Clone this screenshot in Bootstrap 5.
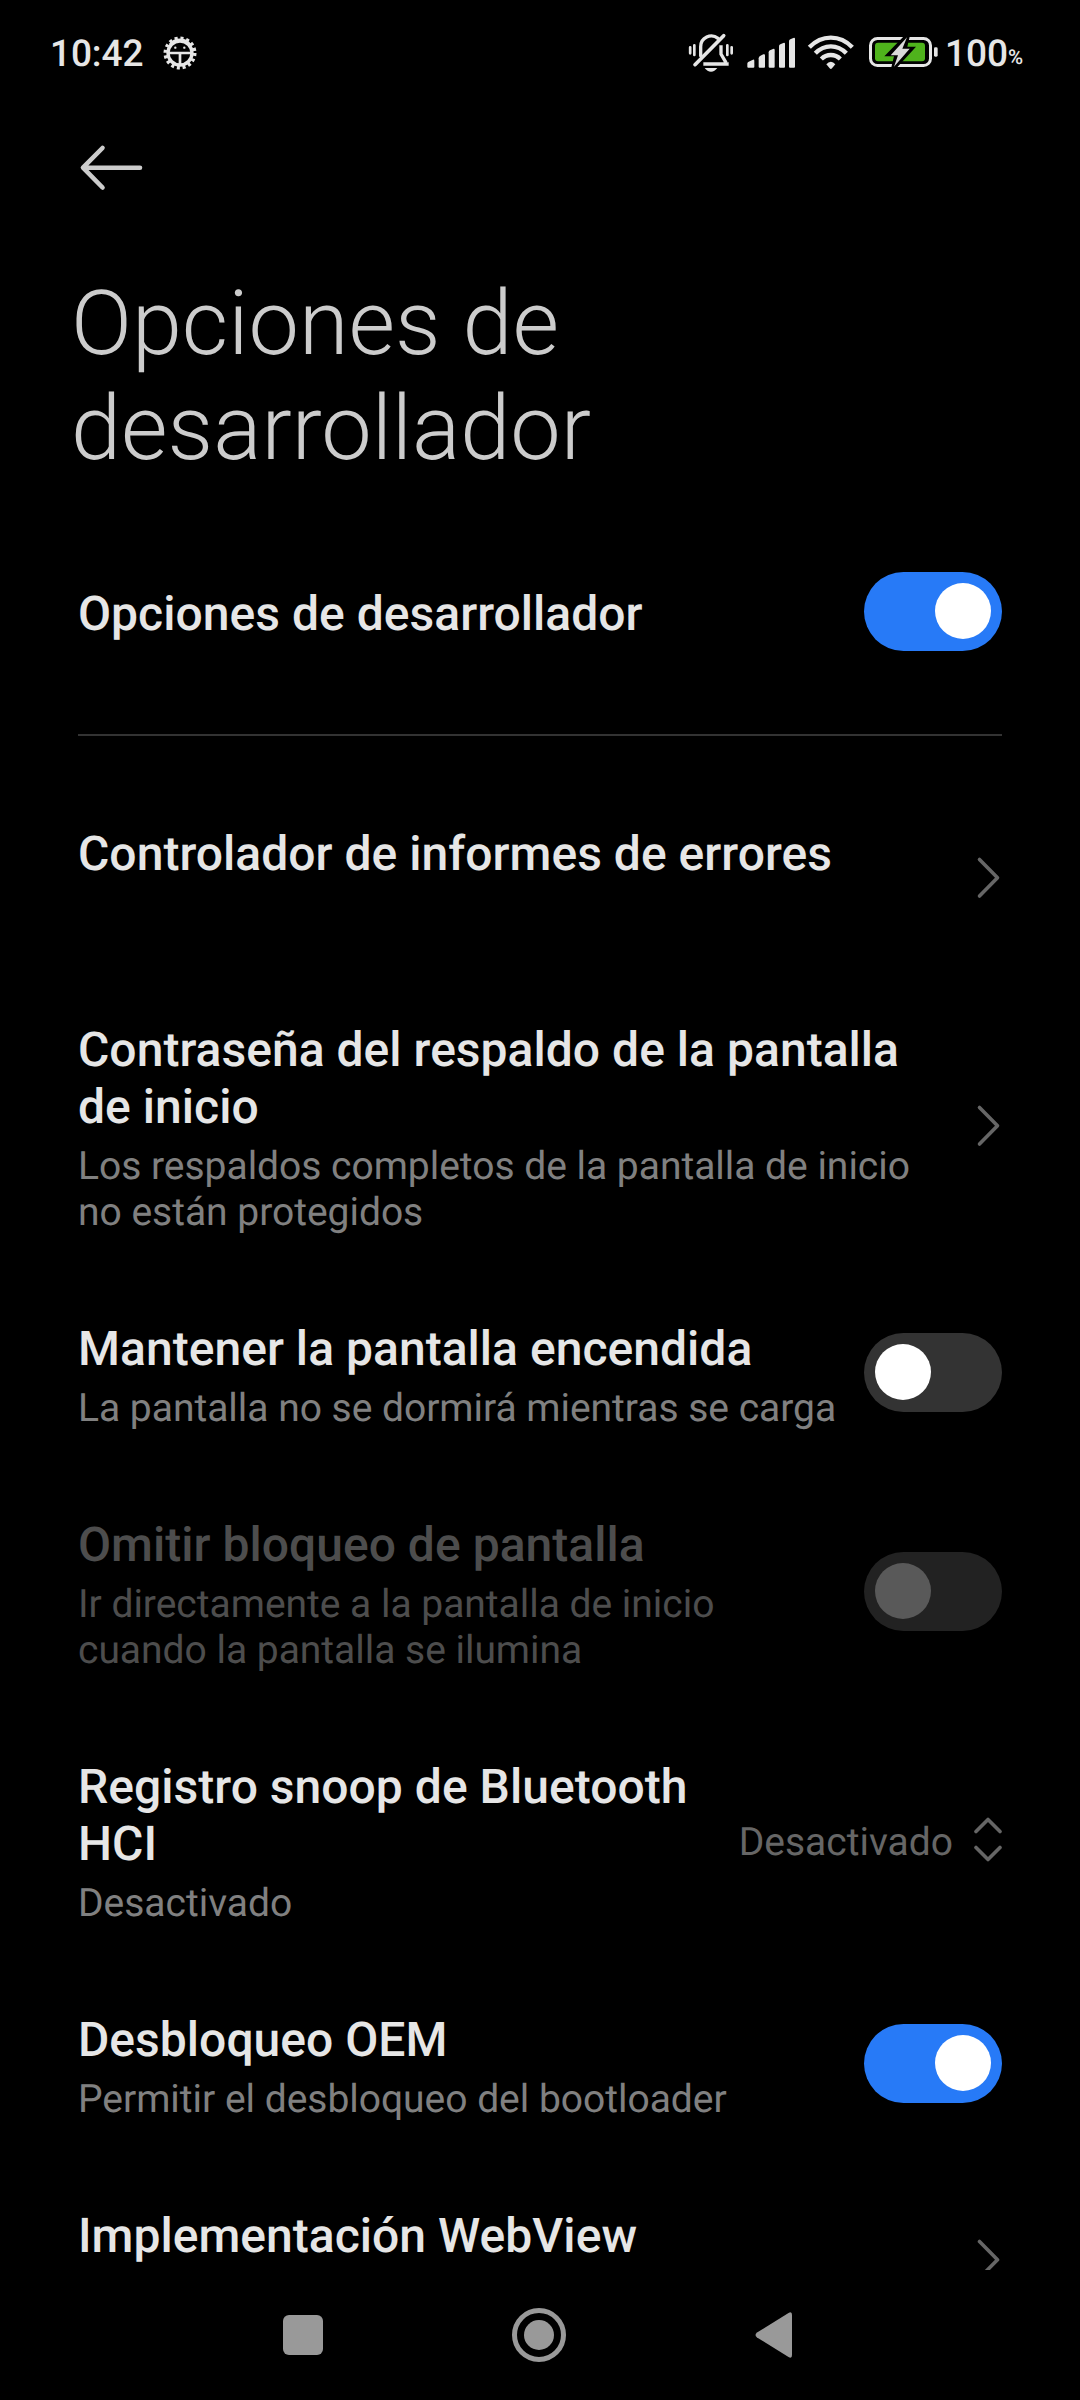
<!DOCTYPE html>
<html lang="es" data-bs-theme="dark">
<head>
<meta charset="utf-8">
<meta name="viewport" content="width=device-width, initial-scale=1">
<title>Opciones de desarrollador</title>
<link href="https://cdn.jsdelivr.net/npm/bootstrap@5.3.0/dist/css/bootstrap.min.css" rel="stylesheet">
<style>
  body { background: #000; font-family: Roboto, "Noto Sans", sans-serif; color: #e6e6e6; text-rendering: geometricPrecision; }
  svg { display: block; flex: none; }
  .phone { width: 1080px; height: 2400px; background: #000; }
  .statusbar { height: 106px; padding: 0 57px 0 50px; color: #e6e6e6; }
  .clock { font-size: 37px; line-height: 44px; font-weight: 500; letter-spacing: -.1px; padding-top: 3px; }
  .pct { font-size: 20.5px; line-height: 24px; font-weight: 500; margin-top: 9px; }
  .gear { margin: -1px 0 0 20px; }
  .status-icons { margin: 3px -94.5px 0 0; }
  .topbar { height: 165px; padding: 37px 78px 0; }
  .page-title { font-size: 90px; line-height: 105px; font-weight: 300; color: #ccc; padding: 0 71px; margin: 0 0 53px; }
  .prefs { margin: 0 78px; min-height: 0; }
  .pref-text { padding: 46px 0 39px; white-space: nowrap; }
  .pref-master .pref-text { padding: 51px 0 46px; }
  .pref-title { font-size: 48px; line-height: 57px; font-weight: 500; letter-spacing: .03px; color: #e6e6e6; margin: 0; }
  .pref-sub { font-size: 39px; line-height: 46px; min-height: 46px; letter-spacing: -.02px; color: #808080; margin: 8px 0 0; }
  .pref-off .pref-title, .pref-off .pref-sub { color: #4d4d4d; }
  .pref-value { font-size: 39px; line-height: 46px; color: #666; padding-top: 6px; }
  .updown { margin-left: 19px; }
  .rule { height: 2px; background: #333; margin: 46px 0 43px; }
  .toggle { width: 138px; height: 79px; padding: 0 11px; margin-top: 1px; background: #333; border-radius: 40px; }
  .toggle i { width: 56px; height: 56px; margin-bottom: 1px; border-radius: 50%; background: #fff; }
  .toggle-on { background: #277af7; justify-content: flex-end; }
  .pref-off .toggle { background: #222; }
  .pref-off .toggle i { background: #595959; }
  .navkeys { height: 130px; padding-right: 4px; }
</style>
</head>
<body>
<div class="phone d-flex flex-column overflow-hidden">
  <header class="statusbar d-flex align-items-center flex-shrink-0">
    <span class="clock">10:42</span>
    <svg class="gear" width="34" height="36" viewBox="399 42 102 108">
      <circle cx="450" cy="96" r="44" fill="none" stroke="#e6e6e6" stroke-width="11" stroke-dasharray="9 8.280"/>
      <circle cx="450" cy="96" r="36" fill="none" stroke="#e6e6e6" stroke-width="10"/>
      <path d="M415 96H485M450 96V132" stroke="#e6e6e6" stroke-width="8"/>
      <path d="M420 72A38 38 0 0 1 480 72" fill="none" stroke="#e6e6e6" stroke-width="9"/>
      <circle cx="436" cy="80" r="3.500" fill="#e6e6e6"/><circle cx="463" cy="80" r="3.500" fill="#e6e6e6"/>
    </svg>
    <div class="d-flex align-items-center ms-auto">
      <svg class="status-icons" width="370" height="70" viewBox="0 0 1110 210">
        <g fill="none" stroke="#e6e6e6" stroke-width="8" stroke-linecap="round">
          <path d="M60.500 82V100M73 76V105M172 76V105M185 82V100"/>
          <path stroke-width="10" d="M92 107V80A32 32 0 0 1 144 55"/>
          <path stroke-width="10" stroke-linecap="butt" d="M153 76V102L168 128M176 132H100"/>
          <path stroke-width="11" d="M75 134L161 47"/>
        </g>
        <path d="M104 144H142Q134 155 123 155T104 144Z" fill="#e6e6e6"/>
        <g fill="#e6e6e6">
          <path d="M232 131Q232 127 236 125L249 119Q253 118 253 123V140Q253 143 250 143H235Q232 143 232 140Z"/>
          <path d="M266 115Q266 110 270 108L280 103Q285 101 285 106V140Q285 143 282 143H269Q266 143 266 140Z"/>
          <path d="M296 97Q296 93 300 91L309 87Q314 85 314 90V140Q314 143 311 143H299Q296 143 296 140Z"/>
          <path d="M327 79Q327 75 331 73L340 69Q345 67 345 72V140Q345 143 342 143H330Q327 143 327 140Z"/>
          <path d="M357 64Q357 60 361 58L370 54Q375 52 375 57V140Q375 143 372 143H360Q357 143 357 140Z"/>
        </g>
        <g fill="none" stroke="#e6e6e6" stroke-width="13">
          <path d="M418 82Q446 53 482.500 53T547 82"/>
          <path d="M436 100Q456 79 482.500 79T529 100"/>
          <path d="M454 117Q466 105 482.500 105T511 117"/>
        </g>
        <path d="M469 133Q475 125 482.500 125T496 133L486 145Q482.500 149 479 145Z" fill="#e6e6e6"/>
        <rect x="601.500" y="55.500" width="180" height="81" rx="21" fill="none" stroke="#e6e6e6" stroke-width="9"/>
        <rect x="615" y="68" width="150" height="56" rx="9" fill="#4fb31c"/>
        <rect x="792" y="82" width="11" height="28" rx="4" fill="#e6e6e6"/>
        <path d="M708 42L643 109H672L662 150H674L738 80H712L721 42Z" fill="#000"/>
        <path d="M711 52L662 106H684L672 140L719 86H697Z" fill="#d9d9d9"/>
      </svg>
      <span class="clock">100</span><span class="pct">%</span>
    </div>
  </header>
  <div class="topbar flex-shrink-0">
    <svg width="68" height="50" viewBox="0 0 68 50" fill="none" stroke="#ccc" stroke-width="4.600" stroke-linecap="round" stroke-linejoin="round"><path d="M24.500 5L5 24.700L24.500 44.500M6 24.700H62"/></svg>
  </div>
  <h1 class="page-title flex-shrink-0">Opciones de<br>desarrollador</h1>
  <main class="prefs flex-grow-1 overflow-hidden">
    <section class="pref-master d-flex align-items-center justify-content-between">
      <div class="pref-text"><h2 class="pref-title">Opciones de desarrollador</h2></div>
      <span class="toggle toggle-on d-flex align-items-center" role="switch" aria-checked="true"><i></i></span>
    </section>
    <div class="rule"></div>
    <section class="d-flex align-items-center justify-content-between">
      <div class="pref-text"><h2 class="pref-title">Controlador de informes de errores</h2><p class="pref-sub"></p></div>
      <svg width="28" height="44" viewBox="0 0 28 44" fill="none" stroke="#666" stroke-width="3.600" stroke-linecap="round" stroke-linejoin="round"><path d="M5.500 4.500L23.500 22.700L5.500 41"/></svg>
    </section>
    <section class="d-flex align-items-center justify-content-between">
      <div class="pref-text"><h2 class="pref-title">Contraseña del respaldo de la pantalla<br>de inicio</h2><p class="pref-sub">Los respaldos completos de la pantalla de inicio<br>no están protegidos</p></div>
      <svg width="28" height="44" viewBox="0 0 28 44" fill="none" stroke="#666" stroke-width="3.600" stroke-linecap="round" stroke-linejoin="round"><path d="M5.500 4.500L23.500 22.700L5.500 41"/></svg>
    </section>
    <section class="d-flex align-items-center justify-content-between">
      <div class="pref-text"><h2 class="pref-title">Mantener la pantalla encendida</h2><p class="pref-sub">La pantalla no se dormirá mientras se carga</p></div>
      <span class="toggle d-flex align-items-center" role="switch" aria-checked="false"><i></i></span>
    </section>
    <section class="pref-off d-flex align-items-center justify-content-between">
      <div class="pref-text"><h2 class="pref-title">Omitir bloqueo de pantalla</h2><p class="pref-sub">Ir directamente a la pantalla de inicio<br>cuando la pantalla se ilumina</p></div>
      <span class="toggle d-flex align-items-center" role="switch" aria-checked="false"><i></i></span>
    </section>
    <section class="d-flex align-items-center justify-content-between">
      <div class="pref-text"><h2 class="pref-title">Registro snoop de Bluetooth<br>HCI</h2><p class="pref-sub">Desactivado</p></div>
      <div class="d-flex align-items-center">
        <span class="pref-value">Desactivado</span>
        <svg class="updown" width="30" height="46" viewBox="0 0 30 46" fill="none" stroke="#666" stroke-width="3.600" stroke-linecap="round" stroke-linejoin="round"><path d="M4 15.500L16 3.500L28 15.500M4 31.500L16 43.500L28 31.500"/></svg>
      </div>
    </section>
    <section class="d-flex align-items-center justify-content-between">
      <div class="pref-text"><h2 class="pref-title">Desbloqueo OEM</h2><p class="pref-sub">Permitir el desbloqueo del bootloader</p></div>
      <span class="toggle toggle-on d-flex align-items-center" role="switch" aria-checked="true"><i></i></span>
    </section>
    <section class="d-flex align-items-center justify-content-between">
      <div class="pref-text"><h2 class="pref-title">Implementación WebView</h2><p class="pref-sub"></p></div>
      <svg width="28" height="44" viewBox="0 0 28 44" fill="none" stroke="#666" stroke-width="3.600" stroke-linecap="round" stroke-linejoin="round"><path d="M5.500 4.500L23.500 22.700L5.500 41"/></svg>
    </section>
  </main>
  <nav class="navkeys d-flex justify-content-center align-items-center flex-shrink-0">
    <svg width="510" height="60" viewBox="283 2305 510 60" fill="#999">
      <rect x="283" y="2315" width="40" height="40" rx="6"/>
      <circle cx="539" cy="2335" r="24.500" fill="none" stroke="#999" stroke-width="5"/>
      <circle cx="539" cy="2335" r="15"/>
      <path d="M757 2332.500L788.500 2313Q792 2311 792 2315V2355Q792 2359 788.500 2357L757 2337.500Q754 2335 757 2332.500Z"/>
    </svg>
  </nav>
</div>
<script src="https://cdn.jsdelivr.net/npm/bootstrap@5.3.0/dist/js/bootstrap.bundle.min.js"></script>
</body>
</html>
